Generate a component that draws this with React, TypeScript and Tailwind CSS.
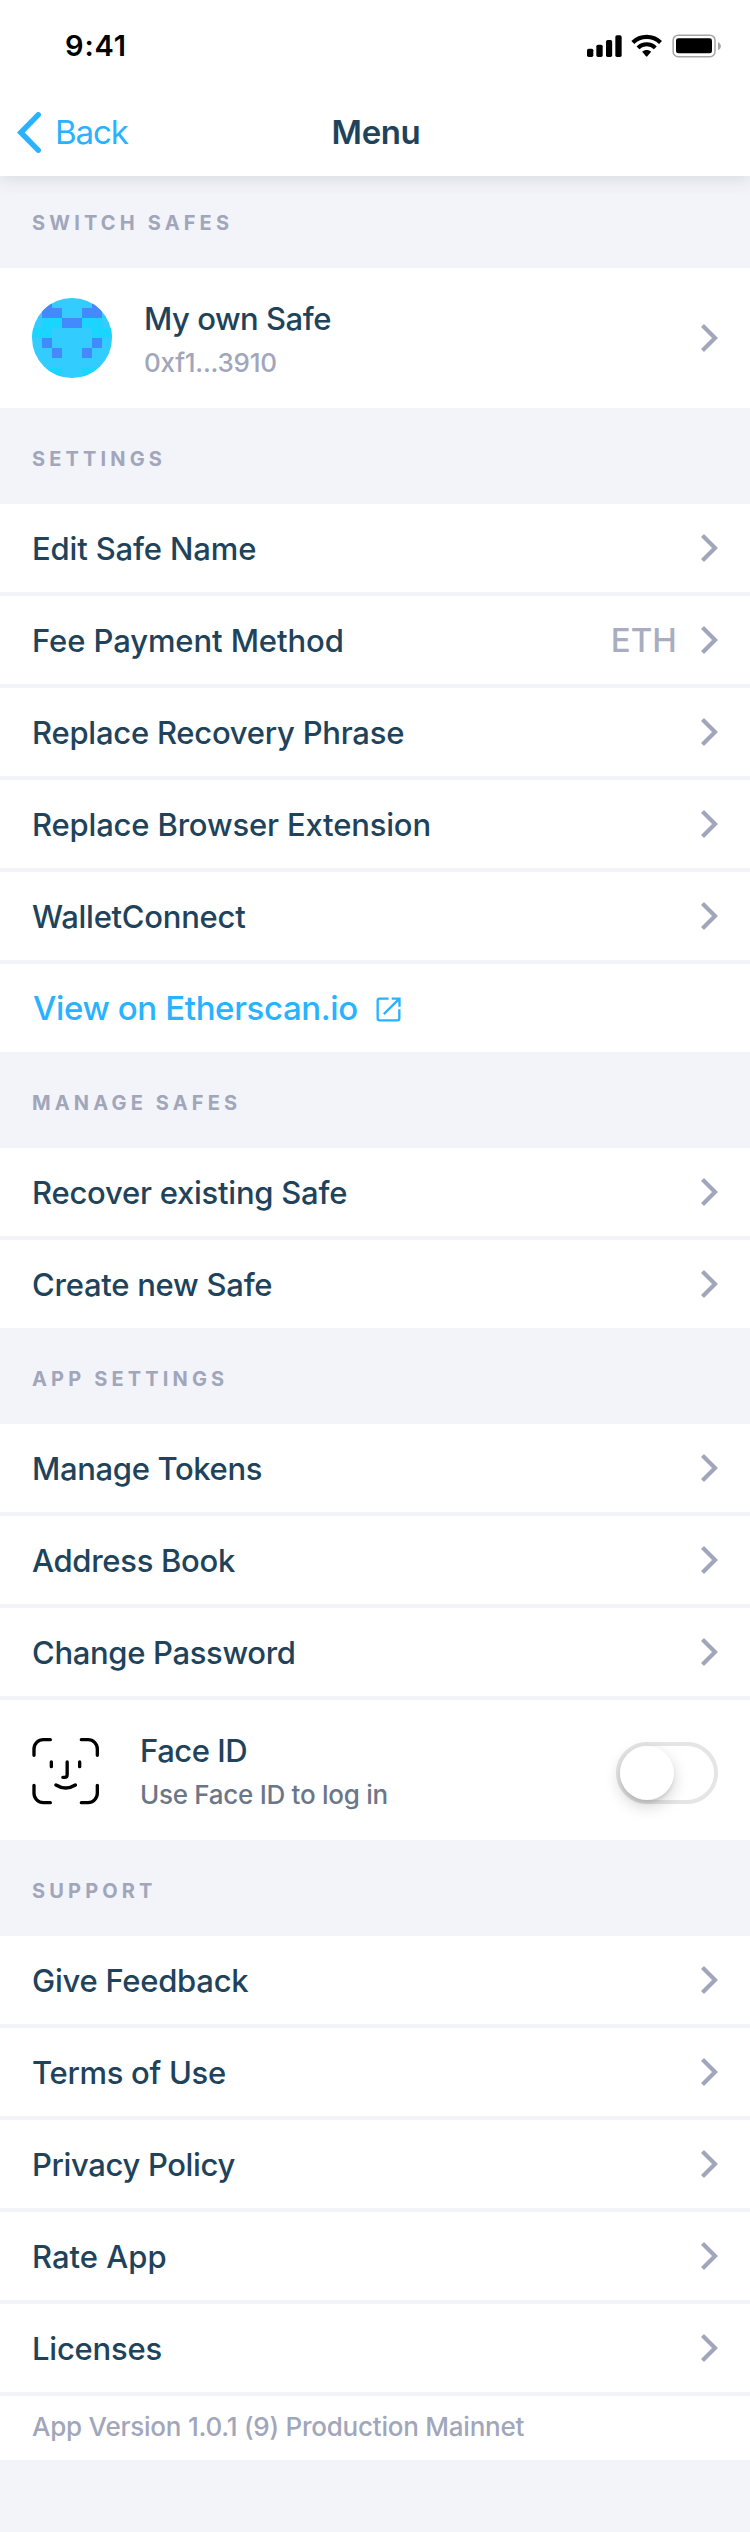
import React, { useState } from "react";

type Item = { label: string; tracking: string; value?: string };

const settings: Item[] = [
  { label: "Edit Safe Name", tracking: "tracking-[-0.15px]" },
  { label: "Fee Payment Method", tracking: "tracking-[-0.09px]", value: "ETH" },
  { label: "Replace Recovery Phrase", tracking: "tracking-[-0.24px]" },
  { label: "Replace Browser Extension", tracking: "tracking-[-0.17px]" },
  { label: "WalletConnect", tracking: "tracking-[-0.26px]" },
];

const manage: Item[] = [
  { label: "Recover existing Safe", tracking: "tracking-[-0.24px]" },
  { label: "Create new Safe", tracking: "tracking-[-0.25px]" },
];

const appSettings: Item[] = [
  { label: "Manage Tokens", tracking: "tracking-[-0.34px]" },
  { label: "Address Book", tracking: "tracking-[-0.29px]" },
  { label: "Change Password", tracking: "tracking-[-0.33px]" },
];

const support: Item[] = [
  { label: "Give Feedback", tracking: "tracking-[-0.26px]" },
  { label: "Terms of Use", tracking: "tracking-[-0.3px]" },
  { label: "Privacy Policy", tracking: "tracking-[-0.35px]" },
  { label: "Rate App", tracking: "tracking-[0px]" },
  { label: "Licenses", tracking: "tracking-[-0.23px]" },
];

function Chevron() {
  return (
    <svg className="h-7 w-[17px] shrink-0" viewBox="0 0 17 28" fill="none" stroke="#a1a6bb" strokeWidth="4.2">
      <path d="M1.5 1.5 14 14 1.5 26.5" />
    </svg>
  );
}

function StatusIcons() {
  return (
    <svg className="mt-[6px] h-6 w-[134px]" viewBox="636 102 402 72" fill="#000">
      <rect x="636" y="146" width="19" height="25" rx="5" />
      <rect x="664" y="134" width="19" height="37" rx="5" />
      <rect x="693" y="120" width="18.500" height="51" rx="5" />
      <rect x="721" y="106" width="19" height="65" rx="5" />
      <g fill="none" stroke="#000">
        <path d="M773.500 127.500a59 59 0 0 1 83 0" strokeWidth="12.500" />
        <path d="M789 143.500a37 37 0 0 1 52 0" strokeWidth="12" />
      </g>
      <path d="M801.500 155.500c7.500-7.500 19.500-7.500 27 0L817 169q-2 2-4 0z" />
      <rect x="894.500" y="105.500" width="125.500" height="64.500" rx="15" fill="none" stroke="#a6a6a6" strokeWidth="4.500" />
      <rect x="903" y="115" width="108" height="45" rx="7" />
      <path d="M1029 127c5 1.500 8.500 6 8.500 11.500s-3.500 10-8.500 11.500z" fill="#a6a6a6" />
    </svg>
  );
}

function Identicon() {
  return (
    <svg className="size-20 shrink-0 rounded-full" viewBox="0 0 8 8" shapeRendering="crispEdges">
      <path fill="#33ccff" d="M0 0h8v8H0z" />
      <path fill="#19d5ff" d="M1 2h2v1H1zM5 2h2v1H5zM0 3h2v1H0zM6 3h2v1H6zM0 7h3v1H0zM5 7h3v1H5z" />
      <path fill="#448aff" d="M0 0h2v1H0zM6 0h2v1H6zM1 1h2v1H1zM5 1h2v1H5zM3 2h2v1H3zM1 4h1v1H1zM6 4h1v1H6zM2 5h1v1H2zM5 5h1v1H5z" />
    </svg>
  );
}

function FaceIcon() {
  return (
    <svg
      className="size-[67px] shrink-0"
      viewBox="96 655 201 201"
      fill="none"
      stroke="#000"
      strokeWidth="10"
      strokeLinecap="round"
    >
      <path d="M102 707V688a28 28 0 0 1 28-28h21M244 660h20a28 28 0 0 1 28 28v19M292 797v24a28 28 0 0 1-28 28h-20M151 849h-21a28 28 0 0 1-28-28v-24" />
      <path d="M154 727v14M239 727v14M201.500 727v38q0 8-8 8h-5M168 796q29 18 58 0" />
    </svg>
  );
}

function ExternalIcon() {
  return (
    <svg className="mt-[3px] size-[25px]" viewBox="1132 1222 75 75" fill="none" stroke="#29b2ff" strokeWidth="7">
      <path d="M1170 1227h-27q-6 0-6 6v53q0 6 6 6h53q6 0 6-6v-27" />
      <path d="M1179 1227h23.500v24M1155.500 1273.500l46-46" />
    </svg>
  );
}

function SectionTitle({ children, first }: { children: string; first?: boolean }) {
  return (
    <h2
      className={`flex items-end pb-[33px] pl-8 text-xl leading-6 font-bold tracking-[4.150px] text-[#a1a6bb] uppercase ${first ? "h-[92px]" : "h-24"}`}
    >
      {children}
    </h2>
  );
}

function Row({ item }: { item: Item }) {
  return (
    <li className="flex h-[88px] items-center bg-white pr-8 pl-8">
      <span className={`flex-1 pt-0.5 text-[31px] leading-10 font-medium text-[#20435b] ${item.tracking}`}>{item.label}</span>
      {item.value && (
        <span className="mr-[24px] text-[33px] leading-10 font-[450] tracking-[0.100px] text-[#a8aebf]">{item.value}</span>
      )}
      <Chevron />
    </li>
  );
}

export default function App() {
  const [on, setOn] = useState(false);
  return (
    <div className="min-h-[2532px] w-[750px] bg-[#f2f4f9] font-['Inter',sans-serif]">
      <header className="relative h-44 bg-white shadow-[0_4px_16px_rgba(40,54,61,0.120)]">
        <div className="flex h-[88px] items-start justify-between pt-7 pr-[29px] pl-[65px]">
          <span className="text-[29px] leading-9 font-semibold tracking-[0.840px] text-black">9:41</span>
          <StatusIcons />
        </div>
        <div className="grid h-[88px] grid-cols-[1fr_auto_1fr] items-center">
          <button className="flex items-center gap-[14px] pl-[17px] text-[#29b2ff]">
            <svg
              className="h-[41px] w-6"
              viewBox="0 0 24 41"
              fill="none"
              stroke="currentColor"
              strokeWidth="5.4"
              strokeLinecap="round"
            >
              <path d="M21.200 2.800 3.800 20.500 21.200 38.200" />
            </svg>
            <span className="text-[33px] leading-10 tracking-[-1.100px]">Back</span>
          </button>
          <h1 className="pl-0.5 text-[33px] leading-10 font-semibold tracking-[-0.380px] text-[#20435b]">Menu</h1>
        </div>
      </header>

      <SectionTitle first>Switch Safes</SectionTitle>
      <div className="flex h-[140px] items-center bg-white px-8">
        <Identicon />
        <div className="ml-8 flex-1 self-start pt-[30px] font-medium">
          <div className="text-[31px] leading-[42px] tracking-[-0.480px] text-[#20435b]">My own Safe</div>
          <div className="mt-0.5 text-[26px] leading-[42px] tracking-[-0.260px] text-[#a1a6bb]">0xf1...3910</div>
        </div>
        <Chevron />
      </div>

      <SectionTitle>Settings</SectionTitle>
      <ul className="flex flex-col gap-1">
        {settings.map((i) => (
          <Row key={i.label} item={i} />
        ))}
        <li className="flex h-[88px] items-center gap-[18px] bg-white pl-[33px]">
          <a className="text-[33px] leading-10 font-medium tracking-[-0.380px] text-[#29b2ff]">View on Etherscan.io</a>
          <ExternalIcon />
        </li>
      </ul>

      <SectionTitle>Manage Safes</SectionTitle>
      <ul className="flex flex-col gap-1">
        {manage.map((i) => (
          <Row key={i.label} item={i} />
        ))}
      </ul>

      <SectionTitle>App Settings</SectionTitle>
      <ul className="flex flex-col gap-1">
        {appSettings.map((i) => (
          <Row key={i.label} item={i} />
        ))}
        <li className="flex h-[140px] items-center bg-white px-8">
          <div className="pt-[3px]">
            <FaceIcon />
          </div>
          <div className="ml-[41px] flex-1 self-start pt-[30px] font-medium">
            <div className="text-[31px] leading-[42px] tracking-[-0.450px] text-[#20435b]">Face ID</div>
            <div className="mt-0.5 text-[26px] leading-[42px] tracking-[-0.280px] text-[#6b7688]">Use Face ID to log in</div>
          </div>
          <button
            role="switch"
            aria-checked={on}
            aria-label="Face ID"
            onClick={() => setOn(!on)}
            className={`mt-[5px] flex h-[62px] w-[102px] rounded-full border-4 border-[#e5e5e5] ${on ? "justify-end bg-[#29b2ff]" : "justify-start bg-white"}`}
          >
            <span className="size-[54px] rounded-full bg-white shadow-[0_6px_16px_rgba(0,0,0,0.180),0_3px_3px_rgba(0,0,0,0.080)]" />
          </button>
        </li>
      </ul>

      <SectionTitle>Support</SectionTitle>
      <ul className="flex flex-col gap-1">
        {support.map((i) => (
          <Row key={i.label} item={i} />
        ))}
        <li className="flex h-16 items-center bg-white pb-[3px] pl-8 text-[26px] leading-10 font-medium tracking-[-0.230px] text-[#a1a6bb]">
          App Version 1.0.1 (9) Production Mainnet
        </li>
      </ul>
    </div>
  );
}
